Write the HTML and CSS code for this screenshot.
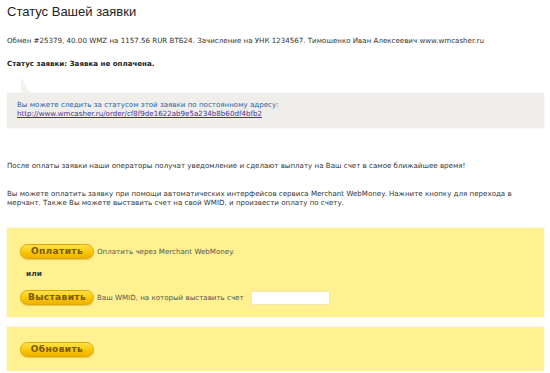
FILE: index.html
```html
<!DOCTYPE html>
<html lang="ru">
<head>
<meta charset="utf-8">
<link rel="stylesheet" href="styles.css">
</head>
<body>
<h1 class="title">Статус Вашей заявки</h1>
<p class="info">Обмен #25379, 40.00 WMZ на 1157.56 RUR ВТБ24. Зачисление на УНК 1234567. Тимошенко Иван Алексеевич www.wmcasher.ru</p>
<p class="status">Статус заявки: Заявка не оплачена.</p>
<div class="note">
  <div class="note-text">Вы можете следить за статусом этой заявки по постоянному адресу:</div>
  <a class="note-link" href="#">http://www.wmcasher.ru/order/cf8f9de1622ab9e5a234b8b60df4bfb2</a>
</div>
<p class="after">После оплаты заявки наши операторы получат уведомление и сделают выплату на Ваш счет в самое ближайшее время!</p>
<p class="desc">Вы можете оплатить заявку при помощи автоматических интерфейсов сервиса Merchant WebMoney. Нажните кнопку для перехода в мерчант. Также Вы можете выставить счет на свой WMID, и произвести оплату по счету.</p>
<div class="panel pay">
  <div class="row"><span class="btn">Оплатить</span><span class="hint">Оплатить через Merchant WebMoney.</span></div>
  <div class="or">или</div>
  <div class="row"><span class="btn">Выставить</span><span class="hint">Ваш WMID, на который выставить счет</span><span class="field"></span></div>
</div>
<div class="panel refresh">
  <div class="row"><span class="btn">Обновить</span></div>
</div>
</body>
</html>
```
FILE: styles.css
```css
html, body { margin: 0; background: #fff; }
body {
  padding: 0 6px 0 7px;
  font-family: "DejaVu Sans", Verdana, sans-serif;
  font-size: 7.1px;
  line-height: 9px;
  color: #333;
}
.title {
  margin: 0;
  padding-top: 3px;
  font-family: "Liberation Sans", Arial, sans-serif;
  font-weight: normal;
  font-size: 13px;
  line-height: 18px;
  color: #222;
}
.info { margin: 15px 0 0; }
.status { margin: 14px 0 0; font-weight: bold; color: #222; }
.note {
  position: relative;
  margin-top: 25px;
  background: #efeeea;
  padding: 7px 10px 10px;
  box-shadow: 0 0 1px #d8d8d0;
}
.note::before {
  content: "";
  position: absolute;
  left: 14px;
  top: -16px;
  border-left: 0 solid transparent;
  border-right: 9px solid transparent;
  border-bottom: 16px solid #f3f2ee;
}
.note-text { color: #2a64a8; }
.note-link { color: #4a3190; text-decoration: underline; }
.after { margin: 33px 0 0; }
.desc { margin: 19px 0 0; }
.panel {
  background: #fff18f;
  box-shadow: 0 0 1px #eadb80;
  padding: 0 13px;
}
.pay { margin-top: 21px; padding-top: 16px; padding-bottom: 12px; }
.refresh { margin-top: 10px; padding-top: 15px; padding-bottom: 14px; }
.row { display: flex; align-items: center; gap: 3px; }
.btn {
  display: inline-flex;
  align-items: center;
  justify-content: center;
  box-sizing: border-box;
  width: 74px;
  height: 15px;
  flex: none;
  border-radius: 8px;
  background: linear-gradient(#ffe34a, #f9c400 60%, #f0b000);
  border: 1px solid #e2a800;
  box-shadow: 0 1px 1px rgba(180,130,0,0.35);
  font-weight: bold;
  font-size: 9px;
  letter-spacing: 0.4px;
  color: #7a5814;
}
.hint { color: #555; }
.or { margin: 10px 0 12px 6px; font-weight: bold; font-size: 7.5px; color: #3a3a3a; line-height: 9px; }
.field {
  display: inline-block;
  box-sizing: border-box;
  width: 79px;
  height: 14px;
  margin-left: 4px;
  background: #fff;
  border: 1px solid #efe6b4;
}
```
